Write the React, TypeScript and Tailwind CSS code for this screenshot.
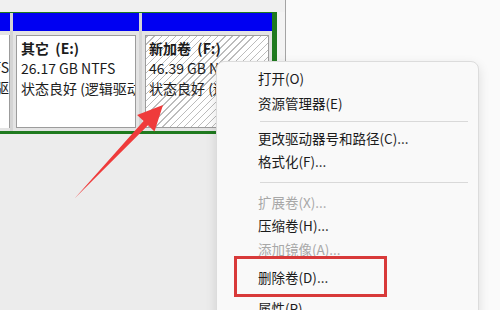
import React from "react";

const font = { fontFamily: '"Noto Sans CJK SC", "Noto Sans", sans-serif' };

function MenuItem({ label, h, disabled }: { label: string; h: string; disabled?: boolean }) {
  return (
    <div className={`${h} flex items-center pl-[41px] text-[13.5px] whitespace-nowrap ${disabled ? "text-[#a8a8a8]" : "text-[#1b1b1b]"}`}>
      {label}
    </div>
  );
}

function Sep({ h }: { h: string }) {
  return (
    <div className={`${h} flex items-center ml-[43px] mr-[10px]`}>
      <div className="h-px w-full bg-[#d9d9d9]" />
    </div>
  );
}

export default function App() {
  return (
    <div className="relative w-[500px] h-[310px] overflow-hidden flex bg-[#fafafa]" style={font}>
      {/* left: disk map */}
      <div className="w-[285px] flex flex-col bg-[#ececec]">
        <div className="h-[12px] bg-[#f0f0f0]" />
        <div className="flex">
          <div className="w-[277px] flex border-t border-b-[3px] border-[#1f7a1f] h-[122px]">
            {/* col A */}
            <div className="w-[10px] flex flex-col">
              <div className="h-[18px] bg-[#0000f2]" />
              <div className="flex-1 bg-[#e4e4e4] pt-[4px] pb-[3px] flex">
                <div className="flex-1 bg-white border-r border-[#9c9c9c] overflow-hidden flex flex-col items-end pt-[2px] text-[14px] leading-[20px] text-[#1b1b1b] whitespace-nowrap">
                  <div>&nbsp;</div>
                  <div>NTFS</div>
                  <div>逻辑驱</div>
                </div>
              </div>
            </div>
            <div className="w-[3px] bg-[#d4d4d4]" />
            {/* col B */}
            <div className="w-[126px] flex flex-col">
              <div className="h-[18px] bg-[#0000f2]" />
              <div className="flex-1 bg-[#e4e4e4] pt-[4px] pb-[3px] px-[3px] flex">
                <div className="flex-1 bg-white border border-[#9c9c9c] overflow-hidden pl-[4px] pt-[2px] text-[14px] leading-[20px] text-[#1b1b1b] whitespace-nowrap">
                  <div className="font-bold">其它&nbsp;&nbsp;(E:)</div>
                  <div>26.17 GB NTFS</div>
                  <div>状态良好 (逻辑驱动器)</div>
                </div>
              </div>
            </div>
            <div className="w-[3px] bg-[#d4d4d4]" />
            {/* col C */}
            <div className="w-[135px] flex flex-col border-r-[5px] border-[#1f7a1f]">
              <div className="h-[18px] bg-[#0000f2]" />
              <div className="flex-1 bg-[#e4e4e4] pt-[4px] pb-[3px] px-[3px] flex">
                <div className="flex-1 border border-[#9c9c9c] overflow-hidden pl-[3px] pt-[2px] text-[14px] leading-[20px] text-[#1b1b1b] whitespace-nowrap bg-[repeating-linear-gradient(-45deg,#ffffff_0px,#ffffff_4px,#bcbcbc_4px,#bcbcbc_5px)]">
                  <div className="font-bold">新加卷&nbsp;&nbsp;(F:)</div>
                  <div>46.39 GB NTFS</div>
                  <div>状态良好 (逻辑驱动器)</div>
                </div>
              </div>
            </div>
          </div>
          <div className="flex-1 bg-[#f3f3f3]" />
        </div>
        <div className="flex-1 bg-[#ececec]" />
      </div>
      <div className="w-px bg-[#a4a4a4]" />
      <div className="flex-1 bg-[#fafafa]" />

      {/* arrow */}
      <svg className="absolute left-0 top-0 pointer-events-none" width="500" height="310" viewBox="0 0 500 310">
        <polygon
          points="75,198 143.6,121.1 137.1,115 163,105 154.5,131.4 148,125.3"
          fill="#ef3b3b"
        />
      </svg>

      {/* context menu */}
      <div className="absolute left-[216px] top-[61px] w-[263px] h-[262px] bg-[#f9f9f9] border border-[#dcdcdc] rounded-[8px] shadow-[0_4px_12px_rgba(0,0,0,0.12)] pt-[4px]">
        <MenuItem label="打开(O)" h="h-[24px]" />
        <MenuItem label="资源管理器(E)" h="h-[26px]" />
        <Sep h="h-[10px]" />
        <MenuItem label="更改驱动器号和路径(C)..." h="h-[24px]" />
        <MenuItem label="格式化(F)..." h="h-[22px]" />
        <Sep h="h-[20px]" />
        <MenuItem label="扩展卷(X)..." h="h-[20px]" disabled />
        <MenuItem label="压缩卷(H)..." h="h-[26px]" />
        <MenuItem label="添加镜像(A)..." h="h-[22px]" disabled />
        <MenuItem label="删除卷(D)..." h="h-[34px]" />
        <MenuItem label="属性(P)" h="h-[28px]" />
      </div>

      {/* red highlight */}
      <div className="absolute left-[234px] top-[256px] w-[153px] h-[41px] border-[3px] border-[#d83a3a]" />
    </div>
  );
}
